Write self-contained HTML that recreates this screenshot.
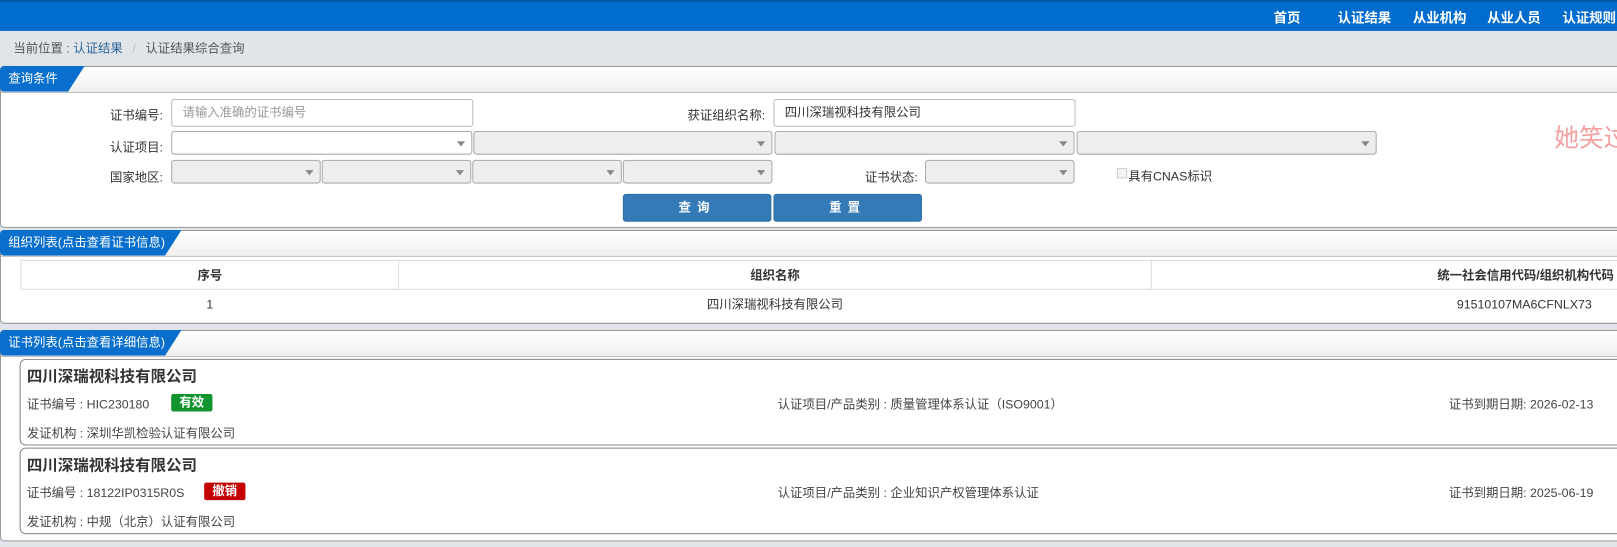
<!DOCTYPE html>
<html><head><meta charset="utf-8"><style>
*{box-sizing:border-box;margin:0;padding:0}
html,body{width:1617px;height:546px;overflow:hidden;background:#e1e5ea}
#w{position:absolute;left:0;top:0;width:1568px;height:530px;transform:scale(1.03125);transform-origin:0 0;font-family:"Liberation Sans","Noto Sans CJK SC",sans-serif;font-size:12px;color:#333;overflow:hidden}
.abs{position:absolute}
.nav{left:0;top:0;width:1568px;height:30px;background:#006cce;border-top:2px solid #0a55a8}
.nav span{position:absolute;top:5px;color:#fff;font-weight:bold;font-size:13px}
.panel{position:absolute;left:0;width:1600px;background:#fff;border:1px solid #999;border-radius:4px}
.ph{position:absolute;left:0;top:0;width:100%;height:25px;background:linear-gradient(#fff,#f0f0f0);border-bottom:1px solid #aaa;border-radius:4px 0 0 0}
.tab{position:absolute;left:-1px;top:-1px;height:25px;background:#0a6fcc;color:#fff;font-size:12px;line-height:25px;padding-left:8px;border-radius:4px 0 0 4px;clip-path:polygon(0 0,100% 0,calc(100% - 16px) 100%,0 100%)}
.lbl{position:absolute;font-size:12px;color:#333;text-align:right}
.inp{position:absolute;border:1px solid #bbb;border-radius:3px;background:#fff;font-size:12px;padding-left:10px;line-height:24px}
.sel{position:absolute;border:1px solid #aaa;border-radius:3px;background:#eee;height:23px}
.sel.w{background:#fff}
.sel:after{content:"";position:absolute;right:6px;top:9px;border:4px solid transparent;border-top:5px solid #888;border-bottom:0}
.btn{position:absolute;top:188px;height:27px;width:144px;background:#337ab7;border:1px solid #2e6da4;border-radius:3px;color:#fff;text-align:center;line-height:25px;font-size:12px;font-weight:bold;letter-spacing:6px}
table{border-collapse:collapse;position:absolute;left:19px;top:28px;width:1580px}
td,th{border:1px solid #ddd;text-align:center;height:28px;font-size:12px}
th{font-weight:bold}
.tr2 td{border:none;height:28px}
.card{position:absolute;left:19px;width:1580px;height:84px;border:1px solid #888;border-radius:6px;background:#fff}
.card .t{position:absolute;left:6px;top:5px;font-size:15px;font-weight:bold;color:#333}
.card .r{position:absolute;top:34px;font-size:12px;color:#444}
.card .r2{position:absolute;top:62px;left:6px;font-size:12px;color:#444}
.badge{position:absolute;top:33px;height:17px;color:#fff;font-weight:bold;font-size:12px;line-height:17px;text-align:center;border-radius:2px}
</style></head><body><div id="w">
<div class="abs nav">
<span style="left:1235px">首页</span><span style="left:1297px">认证结果</span><span style="left:1370px">从业机构</span><span style="left:1442px">从业人员</span><span style="left:1515px">认证规则</span>
</div>
<div class="abs" style="left:13px;top:38px;font-size:12px;color:#555">当前位置 : <span style="color:#2a6496">认证结果</span> <span style="color:#bbb;margin:0 6px">/</span> 认证结果综合查询</div>

<div class="panel" style="top:64px;height:157px">
<div class="ph"></div><div class="tab" style="width:82px">查询条件</div>
</div>
<div class="lbl" style="left:100px;top:103px;width:58px">证书编号:</div>
<div class="inp" style="left:166px;top:96px;width:293px;height:27px;color:#999">请输入准确的证书编号</div>
<div class="lbl" style="left:660px;top:103px;width:82px">获证组织名称:</div>
<div class="inp" style="left:750px;top:96px;width:293px;height:27px;color:#333">四川深瑞视科技有限公司</div>
<div class="lbl" style="left:100px;top:134px;width:58px">认证项目:</div>
<div class="sel w" style="left:166px;top:127px;width:292px"></div>
<div class="sel" style="left:459px;top:127px;width:290px"></div>
<div class="sel" style="left:751px;top:127px;width:291px"></div>
<div class="sel" style="left:1044px;top:127px;width:291px"></div>
<div class="lbl" style="left:100px;top:163px;width:58px">国家地区:</div>
<div class="sel" style="left:166px;top:155px;width:145px"></div>
<div class="sel" style="left:312px;top:155px;width:145px"></div>
<div class="sel" style="left:458px;top:155px;width:145px"></div>
<div class="sel" style="left:604px;top:155px;width:145px"></div>
<div class="lbl" style="left:830px;top:163px;width:60px">证书状态:</div>
<div class="sel" style="left:897px;top:155px;width:145px"></div>
<div class="abs" style="left:1083px;top:163px;width:10px;height:10px;border:1px solid #ccc;background:#f4f4f4"></div>
<div class="abs" style="left:1094px;top:162px;font-size:12px">具有CNAS标识</div>
<div class="abs" style="left:1507px;top:114px;font-size:24px;color:#f2a0a0;white-space:nowrap">她笑过</div>
<div class="btn" style="left:604px">查询</div>
<div class="btn" style="left:750px">重置</div>

<div class="panel" style="top:223px;height:91px">
<div class="ph"></div><div class="tab" style="width:176px">组织列表(点击查看证书信息)</div>
<table><tr><th style="width:366px">序号</th><th style="width:730px">组织名称</th><th style="text-align:right;padding-right:34px">统一社会信用代码/组织机构代码</th></tr>
<tr class="tr2"><td>1</td><td>四川深瑞视科技有限公司</td><td style="text-align:right;padding-right:56px">91510107MA6CFNLX73</td></tr></table>
</div>

<div class="panel" style="top:320px;height:205px">
<div class="ph"></div><div class="tab" style="width:176px">证书列表(点击查看详细信息)</div>
</div>
<div class="card" style="top:348px">
<div class="t">四川深瑞视科技有限公司</div>
<div class="r" style="left:6px">证书编号 : HIC230180</div>
<div class="badge" style="left:146px;width:40px;background:#12952f">有效</div>
<div class="r" style="left:734px">认证项目/产品类别 : 质量管理体系认证（ISO9001）</div>
<div class="r" style="left:1385px">证书到期日期: 2026-02-13</div>
<div class="r2">发证机构 : 深圳华凯检验认证有限公司</div>
</div>
<div class="card" style="top:434px">
<div class="t">四川深瑞视科技有限公司</div>
<div class="r" style="left:6px">证书编号 : 18122IP0315R0S</div>
<div class="badge" style="left:178px;width:40px;background:#c40000">撤销</div>
<div class="r" style="left:734px">认证项目/产品类别 : 企业知识产权管理体系认证</div>
<div class="r" style="left:1385px">证书到期日期: 2025-06-19</div>
<div class="r2">发证机构 : 中规（北京）认证有限公司</div>
</div>
</div></body></html>
